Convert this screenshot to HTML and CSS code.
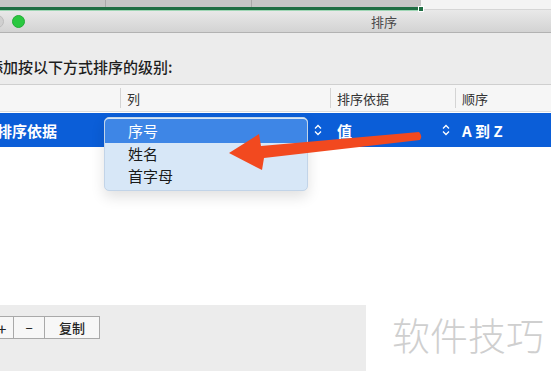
FILE: index.html
```html
<!DOCTYPE html>
<html lang="zh-CN">
<head>
  <meta charset="UTF-8" />
  <title>排序</title>
  <link rel="stylesheet" href="styles.css">
</head>
<body>
  <div class="sheet">
    <div class="sheet-cells">
      <span class="cell c1"></span>
      <span class="cell c2"></span>
      <span class="cell c3"></span>
      <i class="handle"></i>
    </div>
    <div class="sheet-rest"></div>
  </div>

  <div class="titlebar">
    <span class="light gray"></span>
    <span class="light green"></span>
    <span class="title">排序</span>
  </div>

  <div class="dialog">
    <p class="prompt">添加按以下方式排序的级别:</p>

    <div class="table">
      <div class="thead">
        <div class="th"></div>
        <div class="th">列</div>
        <div class="th">排序依据</div>
        <div class="th">顺序</div>
      </div>
      <div class="row selected">
        <div class="td first">排序依据</div>
        <div class="td"><span class="updown col">
          <svg width="8" height="12" viewBox="0 0 8 12"><path d="M1 4.5 L4 1.5 L7 4.5 M1 7.5 L4 10.5 L7 7.5" fill="none" stroke="#fff" stroke-width="1.3"/></svg>
        </span></div>
        <div class="td">值<span class="updown">
          <svg width="8" height="12" viewBox="0 0 8 12"><path d="M1 4.5 L4 1.5 L7 4.5 M1 7.5 L4 10.5 L7 7.5" fill="none" stroke="#fff" stroke-width="1.3"/></svg>
        </span></div>
        <div class="td">A 到 Z</div>
      </div>

      <ul class="menu">
        <li class="active">序号</li>
        <li>姓名</li>
        <li>首字母</li>
      </ul>

      <svg class="arrow" width="200" height="44" viewBox="228 130 200 44">
        <path d="M229 152 L259 133 L261 145 L419 131 Q423 135 420 139 L264 157 L262 169 Z" fill="#f2491f"/>
      </svg>
    </div>

    <div class="footer">
      <div class="tools">
        <button class="tool plus">+</button>
        <button class="tool minus">−</button>
        <button class="tool copy">复制</button>
      </div>
      <div class="watermark">软件技巧</div>
    </div>
  </div>
</body>
</html>
```

FILE: styles.css
```css
* {
  margin: 0;
  padding: 0;
  box-sizing: border-box;
}
body {
  width: 551px;
  height: 371px;
  overflow: hidden;
  background: #fff;
  font-family: "Noto Sans CJK SC", "Noto Sans", sans-serif;
  color: #222;
}
.sheet {
  display: flex;
  height: 10px;
}
.sheet-cells {
  position: relative;
  width: 421px;
  display: flex;
  background: #c6c6c6;
  border-bottom: 3px solid #1f6e43;
  box-shadow: 0 1px 0 #9fd6b5;
}
.cell {
  border-right: 1px solid #a9a9a9;
}
.c1 { width: 106px; }
.c2 { width: 146px; }
.c3 { flex: 1; border-right: none; }
.handle {
  position: absolute;
  right: -3px;
  bottom: -5px;
  width: 6px;
  height: 6px;
  background: #1f6e43;
  border: 1px solid #fff;
}
.sheet-rest {
  flex: 1;
  background: #f4f4f4;
  border-bottom: 1px solid #d6d6d6;
}
.titlebar {
  height: 23px;
  display: flex;
  align-items: center;
  background: linear-gradient(#e9e9e9, #d3d3d3);
  border-bottom: 1px solid #b2b2b2;
}
.light {
  width: 13px;
  height: 13px;
  border-radius: 50%;
}
.light.gray {
  margin-left: -9px;
  background: #d0d0d0;
  border: 1px solid #bdbdbd;
}
.light.green {
  margin-left: 8px;
  background: #2ac840;
  border: 1px solid #22ad36;
}
.title {
  margin-left: 346px;
  font-size: 13px;
  color: #4a4a4a;
}
.dialog {
  background: #ececec;
}
.prompt {
  height: 51px;
  padding-top: 23px;
  margin-left: -12px;
  font-size: 15px;
  font-weight: 500;
  color: #1e1e1e;
}
.table {
  position: relative;
  height: 221px;
  background: #fff;
  border-top: 1px solid #cfcfcf;
}
.thead,
.row {
  display: grid;
  grid-template-columns: 120px 210px 125px 1fr;
}
.thead {
  height: 27px;
  background: #f6f6f6;
  border-bottom: 1px solid #dedede;
  font-size: 13px;
  color: #333;
}
.th {
  display: flex;
  align-items: center;
  padding-left: 6px;
  border-left: 1px solid #d4d4d4;
  margin: 3px 0;
}
.th:first-child {
  border-left: none;
}
.row {
  height: 34px;
  margin-top: 1px;
}
.selected {
  background: #0b5ed8;
  color: #fff;
  font-size: 15px;
  font-weight: bold;
}
.td {
  position: relative;
  display: flex;
  align-items: center;
  padding-left: 7px;
}
.td.first {
  margin-left: -10px;
}
.updown {
  position: absolute;
  right: 5px;
  top: 11px;
  display: flex;
}
.updown.col {
  right: 8px;
}
.menu {
  position: absolute;
  left: 104px;
  top: 32px;
  width: 204px;
  height: 74px;
  list-style: none;
  padding-top: 1px;
  background: #d7e7f7;
  border: 1px solid #c2d4e8;
  border-radius: 5px;
  box-shadow: 0 6px 14px rgba(0, 0, 0, 0.12);
  font-size: 15px;
  color: #1a1a1a;
}
.menu li {
  height: 22px;
  line-height: 22px;
  padding-left: 23px;
}
.menu li.active {
  height: 24px;
  line-height: 24px;
  background: #3e86e6;
  color: #fff;
  border-radius: 4px 4px 0 0;
}
.arrow {
  position: absolute;
  left: 228px;
  top: 46px;
}
.footer {
  display: flex;
  height: 66px;
}
.tools {
  width: 376px;
  display: flex;
  padding-top: 11px;
  margin-left: -10px;
  align-items: flex-start;
}
.tool {
  height: 23px;
  background: #f7f7f7;
  border: 1px solid #a9a9a9;
  border-left: none;
  font-family: inherit;
  font-size: 13px;
  color: #222;
}
.tool.plus {
  width: 24px;
  font-size: 16px;
  line-height: 1;
  border-left: 1px solid #a9a9a9;
}
.tool.minus {
  width: 31px;
}
.tool.copy {
  width: 55px;
  font-weight: 500;
}
.watermark {
  flex: 1;
  background: #fff;
  padding: 1px 0 0 26px;
  font-size: 38px;
  font-weight: 300;
  color: #cfcfcf;
}
```
